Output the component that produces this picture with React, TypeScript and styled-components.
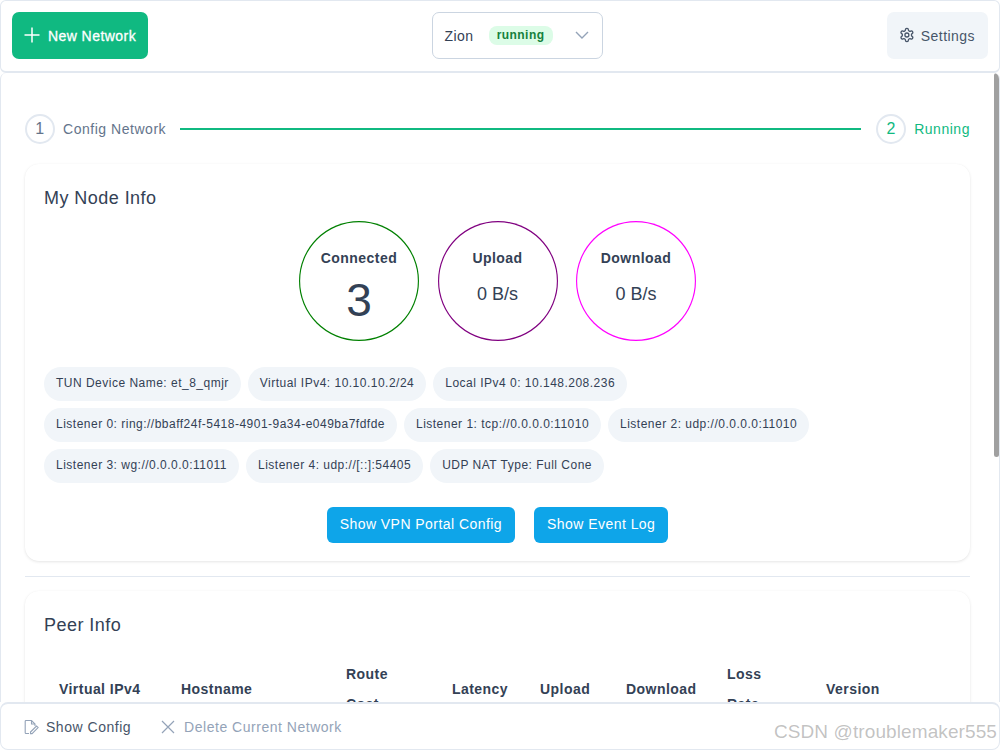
import React from "react";
import styled, { createGlobalStyle } from "styled-components";

const Global = createGlobalStyle`
  html, body { margin: 0; padding: 0; background: #fff; height: 100%; overflow: hidden; }
  * { box-sizing: border-box; }
  body {
    font-family: "Liberation Sans", Arial, sans-serif;
    letter-spacing: 0.45px;
    color: #334155;
  }
  button { font-family: inherit; letter-spacing: inherit; }
`;

const Page = styled.div`
  position: relative;
  height: 750px;
  width: 1000px;
  display: flex;
  flex-direction: column;
  overflow: hidden;
`;

const TopBar = styled.header`
  flex: 0 0 73px;
  display: flex;
  align-items: center;
  justify-content: space-between;
  padding: 0 11px 2px 11px;
  border: 1px solid #e2e8f0;
  border-bottom-width: 2px;
  border-radius: 6px;
  background: #fff;
`;

const ButtonText = styled.span`
  padding-top: 2px;
`;

const NewButton = styled.button`
  width: 136px;
  height: 47px;
  border: 0;
  border-radius: 7px;
  background: #10b981;
  color: #fff;
  font-size: 14px;
  font-weight: 400;
  -webkit-text-stroke: 0.3px #fff;
  display: flex;
  align-items: center;
  justify-content: center;
  gap: 6px;
`;

const Select = styled.div`
  width: 171px;
  height: 47px;
  margin-left: -1px;
  border: 1px solid #cbd5e1;
  border-radius: 7px;
  display: flex;
  align-items: center;
  padding: 0 13px 0 12px;
  font-size: 14px;
`;

const Tag = styled.span`
  margin-left: 15px;
  width: 64px;
  height: 19px;
  border-radius: 8px;
  background: #dcfce7;
  color: #15803d;
  font-size: 12px;
  font-weight: 700;
  display: flex;
  align-items: center;
  justify-content: center;
`;

const SelectArrow = styled.span`
  margin-left: auto;
  display: flex;
  color: #94a3b8;
`;

const SettingsButton = styled.button`
  width: 101px;
  height: 47px;
  padding: 0 13px 0 12px;
  border: 0;
  border-radius: 7px;
  background: #f1f5f9;
  color: #475569;
  font-size: 14px;
  display: flex;
  align-items: center;
  gap: 6px;
`;

const Main = styled.main`
  position: relative;
  flex: 1;
  min-height: 0;
  overflow: hidden;
  border-left: 1px solid #e2e8f0;
  border-right: 1px solid #e2e8f0;
  border-radius: 6px 6px 0 0;
  padding: 41px 29px 0 24px;
`;

const ScrollThumb = styled.div`
  position: absolute;
  top: 0;
  right: 0;
  width: 5px;
  height: 384px;
  border-radius: 3px;
  background: #a0a0a0;
`;

const Stepper = styled.div`
  display: flex;
  align-items: center;
  height: 30px;
`;

const StepCircle = styled.span<{ $active?: boolean }>`
  flex: 0 0 30px;
  height: 30px;
  border-radius: 50%;
  border: 2px solid #e2e8f0;
  display: flex;
  align-items: center;
  justify-content: center;
  font-size: 16px;
  color: ${(p) => (p.$active ? "#10b981" : "#64748b")};
`;

const StepLabel = styled.span<{ $active?: boolean }>`
  margin-left: 8px;
  font-size: 14px;
  letter-spacing: 0.53px;
  color: ${(p) => (p.$active ? "#10b981" : "#64748b")};
`;

const StepLine = styled.span`
  flex: 1;
  height: 2px;
  margin: 0 15px 0 14px;
  background: #10b981;
`;

const Card = styled.section<{ $top: number }>`
  margin-top: ${(p) => p.$top}px;
  border-radius: 14px;
  background: #fff;
  box-shadow: 0 1px 3px rgba(0, 0, 0, 0.1), 0 0 1px rgba(0, 0, 0, 0.04);
  padding: 20px 19px 18px;
`;

const CardTitle = styled.h2`
  margin: 0;
  font-size: 18px;
  line-height: 28px;
  font-weight: 400;
`;

const Circles = styled.div`
  display: flex;
  justify-content: center;
  gap: 18.5px;
  margin-top: 9px;
`;

const Circle = styled.div<{ $color: string }>`
  width: 120px;
  height: 120px;
  border-radius: 50%;
  box-shadow: inset 0 0 0 1.15px ${(p) => p.$color};
  display: flex;
  flex-direction: column;
  align-items: center;
  padding-top: 27px;
`;

const CircleLabel = styled.div`
  font-size: 14px;
  line-height: 20px;
  font-weight: 700;
`;

const CircleValue = styled.div<{ $big?: boolean }>`
  margin-top: ${(p) => (p.$big ? 9 : 12)}px;
  font-size: ${(p) => (p.$big ? 46 : 18)}px;
  line-height: ${(p) => (p.$big ? 46 : 28)}px;
  letter-spacing: 0;
`;

const Chips = styled.div`
  display: flex;
  flex-wrap: wrap;
  gap: 7px;
  margin-top: 26px;
`;

const Chip = styled.span`
  height: 34px;
  padding: 0 12px;
  border-radius: 17px;
  background: #f1f5f9;
  font-size: 12px;
  letter-spacing: 0.49px;
  line-height: 32px;
  white-space: nowrap;
`;

const Actions = styled.div`
  display: flex;
  justify-content: center;
  gap: 19px;
  margin-top: 24px;
`;

const ActionButton = styled.button`
  height: 36px;
  padding: 0 13px 2px;
  border: 0;
  border-radius: 6px;
  background: #0ea5e9;
  color: #fff;
  font-size: 14px;
`;

const Divider = styled.hr`
  margin: 15px 0 0;
  border: 0;
  border-top: 1px solid #e2e8f0;
`;

const PeerTable = styled.table`
  width: 905px;
  margin-top: 20px;
  table-layout: fixed;
  border-collapse: collapse;
`;

const HeadCell = styled.th<{ $width: number }>`
  width: ${(p) => p.$width}px;
  padding: 0 13px 0 15px;
  font-size: 14px;
  line-height: 30px;
  font-weight: 700;
  text-align: left;
`;

const Footer = styled.footer`
  flex: 0 0 48px;
  display: flex;
  align-items: center;
  gap: 30px;
  padding: 0 22px;
  border: 1px solid #e2e8f0;
  border-top-width: 2px;
  border-radius: 8px;
  background: #fff;
  position: relative;
  z-index: 1;
`;

const FooterAction = styled.span<{ $muted?: boolean }>`
  display: flex;
  align-items: center;
  gap: ${(p) => (p.$muted ? 9 : 7)}px;
  font-size: 14px;
  letter-spacing: 0.52px;
  color: ${(p) => (p.$muted ? "#94a3b8" : "#475569")};
`;

const Watermark = styled.div`
  position: absolute;
  right: 3px;
  bottom: 7px;
  z-index: 2;
  font-size: 19px;
  letter-spacing: 0.1px;
  color: rgba(120, 120, 120, 0.45);
`;

const peerColumns: { w: number; label: React.ReactNode }[] = [
  { w: 122, label: "Virtual IPv4" },
  { w: 165, label: "Hostname" },
  { w: 106, label: <>Route<br />Cost</> },
  { w: 88, label: "Latency" },
  { w: 86, label: "Upload" },
  { w: 101, label: "Download" },
  { w: 99, label: <>Loss<br />Rate</> },
  { w: 138, label: "Version" },
];

const chips = [
  "TUN Device Name: et_8_qmjr",
  "Virtual IPv4: 10.10.10.2/24",
  "Local IPv4 0: 10.148.208.236",
  "Listener 0: ring://bbaff24f-5418-4901-9a34-e049ba7fdfde",
  "Listener 1: tcp://0.0.0.0:11010",
  "Listener 2: udp://0.0.0.0:11010",
  "Listener 3: wg://0.0.0.0:11011",
  "Listener 4: udp://[::]:54405",
  "UDP NAT Type: Full Cone",
];

export default function App() {
  return (
    <Page>
      <Global />
      <TopBar>
        <NewButton>
          <svg width="18" height="18" viewBox="0 0 18 18" fill="none" stroke="#fff" strokeWidth="1.5">
            <path d="M8 1.5v15M.5 9h15" />
          </svg>
          <ButtonText>New Network</ButtonText>
        </NewButton>
        <Select>
          <ButtonText>Zion</ButtonText>
          <Tag>running</Tag>
          <SelectArrow>
            <svg width="14" height="14" viewBox="0 0 14 14" fill="none" stroke="currentColor" strokeWidth="1.4">
              <path d="M1 4l6 6 6-6" />
            </svg>
          </SelectArrow>
        </Select>
        <SettingsButton>
          <svg width="16" height="16" viewBox="0 0 24 24" fill="none" stroke="currentColor" strokeWidth="2" strokeLinecap="round" strokeLinejoin="round">
            <path d="M12.22 2h-.44a2 2 0 0 0-2 2v.18a2 2 0 0 1-1 1.73l-.43.25a2 2 0 0 1-2 0l-.15-.08a2 2 0 0 0-2.73.73l-.22.38a2 2 0 0 0 .73 2.73l.15.1a2 2 0 0 1 1 1.72v.51a2 2 0 0 1-1 1.74l-.15.09a2 2 0 0 0-.73 2.73l.22.38a2 2 0 0 0 2.73.73l.15-.08a2 2 0 0 1 2 0l.43.25a2 2 0 0 1 1 1.73V20a2 2 0 0 0 2 2h.44a2 2 0 0 0 2-2v-.18a2 2 0 0 1 1-1.73l.43-.25a2 2 0 0 1 2 0l.15.08a2 2 0 0 0 2.73-.73l.22-.39a2 2 0 0 0-.73-2.73l-.15-.08a2 2 0 0 1-1-1.74v-.5a2 2 0 0 1 1-1.74l.15-.09a2 2 0 0 0 .73-2.73l-.22-.38a2 2 0 0 0-2.73-.73l-.15.08a2 2 0 0 1-2 0l-.43-.25a2 2 0 0 1-1-1.73V4a2 2 0 0 0-2-2z" />
            <circle cx="12" cy="12" r="3" />
          </svg>
          <ButtonText>Settings</ButtonText>
        </SettingsButton>
      </TopBar>
      <Main>
        <ScrollThumb />
        <Stepper>
          <StepCircle>1</StepCircle>
          <StepLabel>Config Network</StepLabel>
          <StepLine />
          <StepCircle $active>2</StepCircle>
          <StepLabel $active>Running</StepLabel>
        </Stepper>
        <Card $top={20}>
          <CardTitle>My Node Info</CardTitle>
          <Circles>
            <Circle $color="green">
              <CircleLabel>Connected</CircleLabel>
              <CircleValue $big>3</CircleValue>
            </Circle>
            <Circle $color="purple">
              <CircleLabel>Upload</CircleLabel>
              <CircleValue>0 B/s</CircleValue>
            </Circle>
            <Circle $color="fuchsia">
              <CircleLabel>Download</CircleLabel>
              <CircleValue>0 B/s</CircleValue>
            </Circle>
          </Circles>
          <Chips>
            {chips.map((c) => (
              <Chip key={c}>{c}</Chip>
            ))}
          </Chips>
          <Actions>
            <ActionButton>Show VPN Portal Config</ActionButton>
            <ActionButton>Show Event Log</ActionButton>
          </Actions>
        </Card>
        <Divider />
        <Card $top={14}>
          <CardTitle>Peer Info</CardTitle>
          <PeerTable>
            <thead>
              <tr>
                {peerColumns.map((c, i) => (
                  <HeadCell key={i} $width={c.w}>{c.label}</HeadCell>
                ))}
              </tr>
            </thead>
          </PeerTable>
        </Card>
      </Main>
      <Footer>
        <FooterAction>
          <svg width="16" height="16" viewBox="0 0 16 16" fill="none" stroke="#94a3b8" strokeWidth="1.1">
            <path d="M6 14.5H3a.8.8 0 0 1-.8-.8V2.3a.8.8 0 0 1 .8-.8h5.5L12 5v2" />
            <path d="M8.5 1.5V5H12" />
            <path d="M7.5 13l6-6 1.6 1.6-6 6H7.5z" />
          </svg>
          Show Config
        </FooterAction>
        <FooterAction $muted>
          <svg width="14" height="14" viewBox="0 0 14 14" fill="none" stroke="#94a3b8" strokeWidth="1.2">
            <path d="M1 1l12 12M13 1L1 13" />
          </svg>
          Delete Current Network
        </FooterAction>
      </Footer>
      <Watermark>CSDN @troublemaker555</Watermark>
    </Page>
  );
}
